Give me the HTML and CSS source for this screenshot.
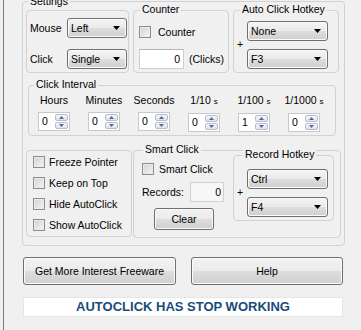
FILE: index.html
```html
<!DOCTYPE html>
<html lang="en">
<head>
    <meta charset="UTF-8">
    <meta name="viewport" content="width=device-width, initial-scale=1.0">
    <title>AutoClick</title>
    <link rel="stylesheet" href="styles.css">
</head>
<body>
    <div class="window">
        <div class="panel">
            <span class="group-title panel-title">Settings</span>

            <div class="row-top">
                <div class="group mouse-box">
                    <div class="field">
                        <span class="field-label">Mouse</span>
                        <div class="select"><span>Left</span><i class="arrow"></i></div>
                    </div>
                    <div class="field">
                        <span class="field-label">Click</span>
                        <div class="select"><span>Single</span><i class="arrow"></i></div>
                    </div>
                </div>

                <div class="group counter-box">
                    <span class="group-title">Counter</span>
                    <div class="check counter-check"><span class="box"></span>Counter</div>
                    <div class="field counter-field">
                        <div class="textbox">0</div>
                        <span class="clicks">(Clicks)</span>
                    </div>
                </div>

                <div class="group hotkey-box">
                    <span class="group-title">Auto Click Hotkey</span>
                    <span class="plus">+</span>
                    <div class="select-stack">
                        <div class="select"><span>None</span><i class="arrow"></i></div>
                        <div class="select"><span>F3</span><i class="arrow"></i></div>
                    </div>
                </div>
            </div>

            <div class="group interval">
                <span class="group-title">Click Interval</span>
                <div class="col">
                    <span class="col-label">Hours</span>
                    <div class="spin"><span class="spin-value">0</span><span class="spin-btns"><i class="up"></i><i class="down"></i></span></div>
                </div>
                <div class="col">
                    <span class="col-label">Minutes</span>
                    <div class="spin"><span class="spin-value">0</span><span class="spin-btns"><i class="up"></i><i class="down"></i></span></div>
                </div>
                <div class="col">
                    <span class="col-label">Seconds</span>
                    <div class="spin"><span class="spin-value">0</span><span class="spin-btns"><i class="up"></i><i class="down"></i></span></div>
                </div>
                <div class="col">
                    <span class="col-label">1/10 <small>s</small></span>
                    <div class="spin"><span class="spin-value">0</span><span class="spin-btns"><i class="up"></i><i class="down"></i></span></div>
                </div>
                <div class="col">
                    <span class="col-label">1/100 <small>s</small></span>
                    <div class="spin"><span class="spin-value">1</span><span class="spin-btns"><i class="up"></i><i class="down"></i></span></div>
                </div>
                <div class="col">
                    <span class="col-label">1/1000 <small>s</small></span>
                    <div class="spin"><span class="spin-value">0</span><span class="spin-btns"><i class="up"></i><i class="down"></i></span></div>
                </div>
            </div>

            <div class="row-bottom">
                <div class="group options">
                    <div class="check"><span class="box"></span>Freeze Pointer</div>
                    <div class="check"><span class="box"></span>Keep on Top</div>
                    <div class="check"><span class="box"></span>Hide AutoClick</div>
                    <div class="check"><span class="box"></span>Show AutoClick</div>
                </div>

                <div class="group smart">
                    <span class="group-title">Smart Click</span>
                    <div class="smart-left">
                        <div class="check"><span class="box"></span>Smart Click</div>
                        <div class="records">
                            <span>Records:</span>
                            <div class="textbox readonly">0</div>
                        </div>
                        <button class="btn clear">Clear</button>
                    </div>

                    <div class="group record-hotkey">
                        <span class="group-title">Record Hotkey</span>
                        <span class="plus">+</span>
                        <div class="select-stack">
                            <div class="select"><span>Ctrl</span><i class="arrow"></i></div>
                            <div class="select"><span>F4</span><i class="arrow"></i></div>
                        </div>
                    </div>
                </div>
            </div>
        </div>

        <div class="actions">
            <button class="btn freeware">Get More Interest Freeware</button>
            <button class="btn help">Help</button>
        </div>

        <div class="status">AUTOCLICK HAS STOP WORKING</div>
    </div>
</body>
</html>
```

FILE: styles.css
```css
* {
    box-sizing: border-box;
}

body {
    margin: 0;
    height: 330px;
    overflow: hidden;
    background-color: #f0f0f0;
    font-family: "Liberation Sans", Arial, sans-serif;
    font-size: 10.5px;
    color: #000;
}

.window {
    margin-left: 3px;
    height: 330px;
    padding: 1px 0 0 18px;
    border-left: 1px solid #7a7a7a;
}

.panel {
    position: relative;
    width: 323px;
    height: 245px;
    padding: 8px 3px 0;
    border: 1px solid #d2d2d2;
    border-radius: 4px;
}

.group {
    position: relative;
    border: 1px solid #d2d2d2;
    border-radius: 4px;
}

.group-title {
    position: absolute;
    top: -8px;
    left: 6px;
    padding: 0 2px;
    line-height: 13px;
    white-space: nowrap;
    background-color: #f0f0f0;
}

.panel-title {
    top: -7px;
    left: 5px;
}

/* top row */

.row-top {
    display: flex;
    gap: 4px;
    height: 63px;
}

.mouse-box {
    width: 103px;
    padding: 7px 0 0 3px;
}

.field {
    display: flex;
    align-items: center;
    height: 20px;
}

.field + .field {
    margin-top: 11px;
}

.field-label {
    width: 37px;
}

.select {
    display: flex;
    align-items: center;
    height: 20px;
    padding: 0 6px 0 3px;
    border: 1px solid #707070;
    border-radius: 3px;
    background: linear-gradient(#f3f3f3, #ebebeb 48%, #dddddd 52%, #cfcfcf);
    box-shadow: inset 0 0 0 1px #fbfbfb;
}

.mouse-box .select {
    width: 60px;
}

.arrow {
    margin-left: auto;
    width: 7px;
    height: 4px;
    background-color: #000;
    clip-path: polygon(0 0, 100% 0, 50% 100%);
}

.counter-box {
    width: 96px;
    padding: 11px 0 0 5px;
}

.check {
    display: flex;
    align-items: center;
    height: 20px;
    white-space: nowrap;
}

.box {
    width: 12px;
    height: 12px;
    margin-right: 5px;
    border: 1px solid #8e8e8e;
    background: linear-gradient(135deg, #d0d0d0, #f6f6f6);
    box-shadow: inset 0 0 0 1px #eaeaea;
}

.counter-check .box {
    margin-right: 7px;
}

.counter-field {
    margin-top: 7px;
}

.textbox {
    width: 45px;
    height: 20px;
    padding-right: 3px;
    line-height: 18px;
    text-align: right;
    background-color: #fff;
    border: 1px solid #cdcdcd;
    border-top-color: #b4b4b4;
}

.clicks {
    margin-left: 5px;
}

.hotkey-box {
    display: flex;
    align-items: flex-start;
    width: 106px;
    padding: 10px 0 0 3px;
}

.plus {
    width: 10px;
    margin-top: 17px;
    line-height: 13px;
}

.select-stack .select {
    width: 81px;
}

.select-stack .select + .select {
    margin-top: 8px;
}

/* click interval */

.interval {
    display: flex;
    width: 308px;
    height: 51px;
    margin: 12px 0 0 2px;
    padding-top: 8px;
}

.interval .group-title {
    left: 5px;
}

.col {
    display: flex;
    flex-direction: column;
    align-items: center;
    width: 50px;
}

.col-label {
    line-height: 13px;
    white-space: nowrap;
}

.col-label small {
    font-size: 8px;
}

.spin {
    display: flex;
    width: 32px;
    height: 19px;
    margin-top: 5px;
    padding: 1px;
    background-color: #fff;
    border: 1px solid #c8c8c8;
}

.spin-value {
    flex-grow: 1;
    padding-left: 2px;
    line-height: 15px;
}

.spin-btns {
    display: flex;
    flex-direction: column;
    gap: 1px;
    width: 13px;
}

.spin-btns i {
    display: flex;
    flex: 1;
    align-items: center;
    justify-content: center;
    border: 1px solid #b6bdcf;
    border-radius: 2px;
    background: linear-gradient(#f6f7fb, #dde2ec);
}

.spin-btns i::after {
    content: "";
    width: 5px;
    height: 3px;
    background-color: #56669a;
}

.spin-btns .up::after {
    clip-path: polygon(50% 0, 100% 100%, 0 100%);
}

.spin-btns .down::after {
    clip-path: polygon(0 0, 100% 0, 50% 100%);
}

/* bottom row */

.row-bottom {
    display: flex;
    align-items: flex-start;
    gap: 1px;
    margin-top: 14px;
}

.options {
    width: 106px;
    height: 87px;
    padding-left: 6px;
}

.options .check {
    height: 21px;
}

.options .box {
    margin-right: 4px;
}

.smart {
    display: flex;
    align-items: flex-start;
    width: 208px;
    height: 88px;
    padding-left: 8px;
}

.smart .group-title {
    left: 9px;
}

.smart-left {
    width: 82px;
    padding-top: 8px;
}

.records {
    display: flex;
    align-items: center;
    height: 20px;
    margin-top: 3px;
}

.records .readonly {
    width: 34px;
    margin-left: auto;
    padding-right: 2px;
    background-color: #f7f7f7;
    border-color: #d0d0d0;
}

.btn {
    display: flex;
    align-items: center;
    justify-content: center;
    padding: 0;
    font: inherit;
    color: #000;
    border: 1px solid #707070;
    border-radius: 3px;
    background: linear-gradient(#f2f2f2, #ebebeb 48%, #dddddd 52%, #cfcfcf);
    box-shadow: inset 0 0 0 1px #fbfbfb;
}

.clear {
    width: 60px;
    height: 22px;
    margin: 6px 0 0 12px;
}

.record-hotkey {
    display: flex;
    align-items: flex-start;
    width: 101px;
    height: 66px;
    margin: 4px 0 0 9px;
    padding: 13px 0 0 3px;
}

/* footer */

.actions {
    display: flex;
    gap: 15px;
    margin: 11px 0 0 1px;
}

.actions .btn {
    height: 28px;
}

.freeware {
    width: 153px;
}

.help {
    width: 152px;
}

.status {
    width: 320px;
    height: 20px;
    margin: 12px 0 0 1px;
    line-height: 18px;
    text-align: center;
    font-size: 13px;
    font-weight: bold;
    color: #1a4c7a;
    background-color: #fff;
    border: 1px solid #e6e6e6;
}
```
